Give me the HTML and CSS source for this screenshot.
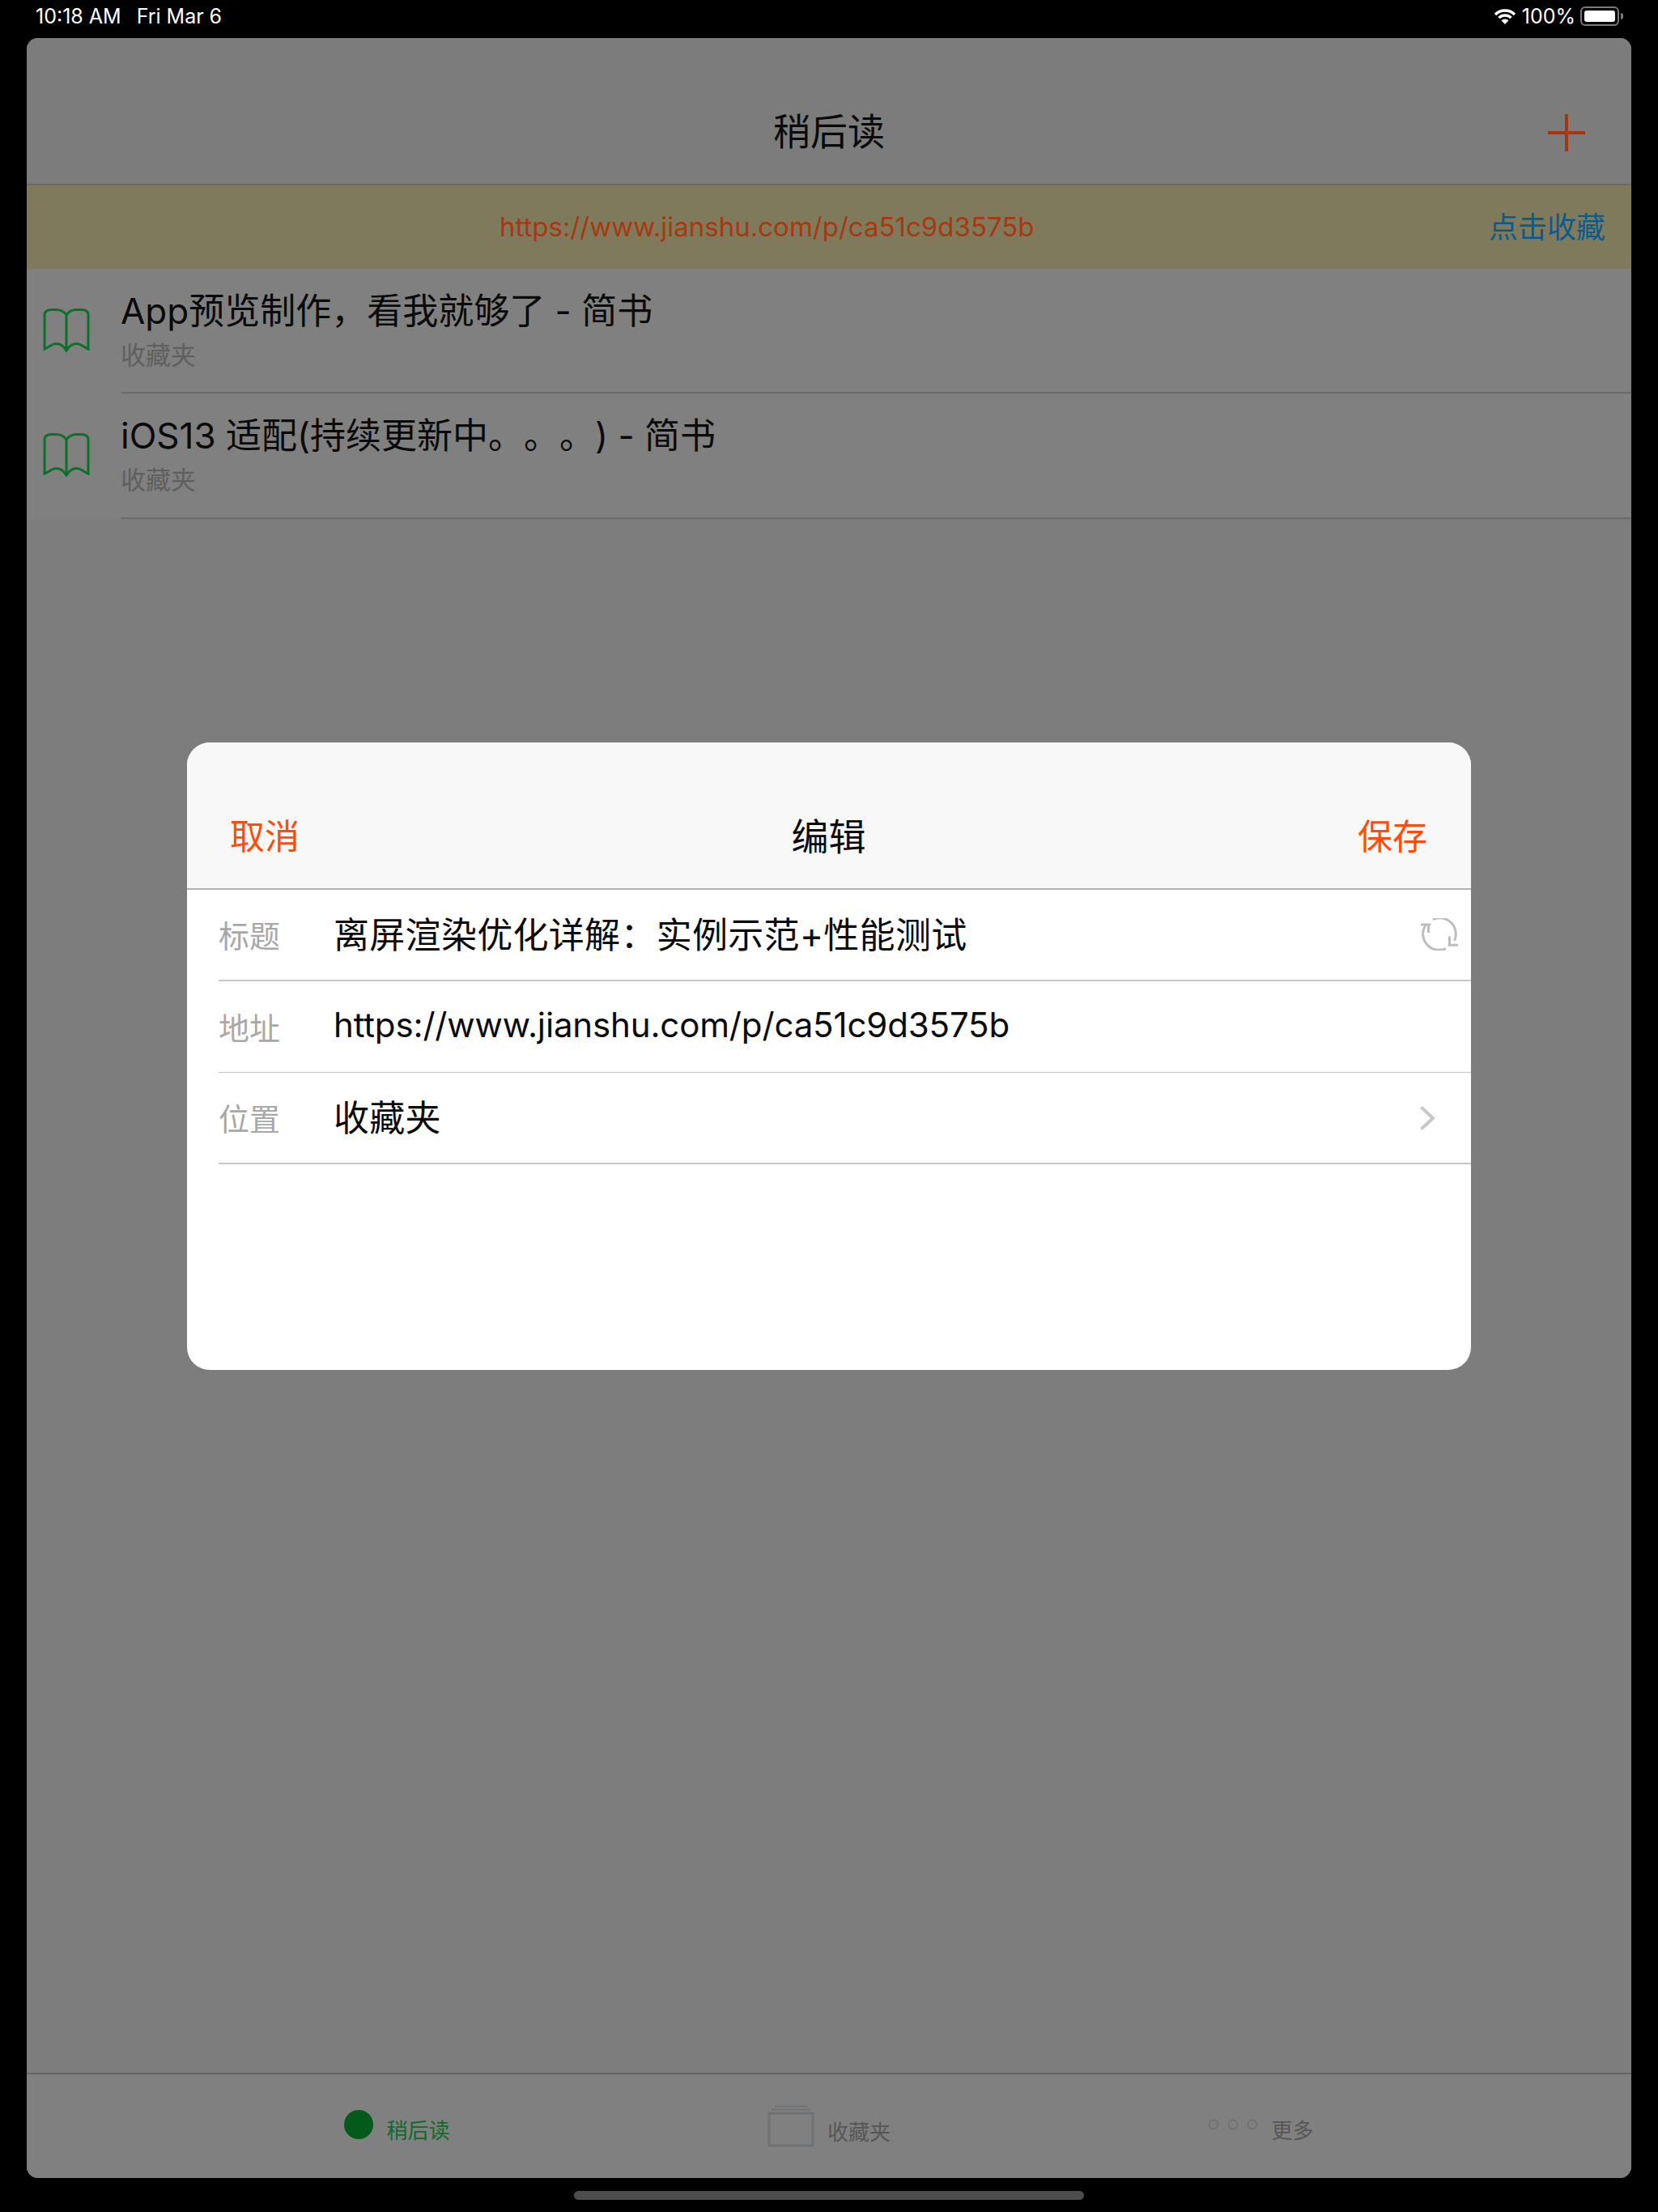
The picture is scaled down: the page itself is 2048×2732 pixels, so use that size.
FILE: index.html
```html
<!DOCTYPE html>
<html lang="zh-CN">
<head>
  <meta charset="UTF-8" />
  <title>稍后读</title>
  <link rel="stylesheet" href="styles.css">
</head>
<body>
  <div class="status">
    <div class="status-left"><span>10:18 AM</span><span>Fri Mar 6</span></div>
    <div class="status-right">
      <svg class="wifi" width="28" height="20" viewBox="0 0 28 20">
        <path d="M2 8a17 17 0 0 1 24 0M6.500 12a11 11 0 0 1 15 0" fill="none" stroke="#fff" stroke-width="3.500"/>
        <path d="M9.500 15.200a6.500 6.500 0 0 1 9 0L14 20z" fill="#fff"/>
      </svg>
      <span>100%</span>
      <div class="battery"><div class="battery-fill"></div></div>
      <div class="battery-nub"></div>
    </div>
  </div>

  <div class="app">
    <header class="nav">
      <h1>稍后读</h1>
      <svg class="plus" width="46" height="46" viewBox="0 0 46 46">
        <path d="M23 0v46M0 23h46" stroke="#a8350c" stroke-width="4"/>
      </svg>
    </header>

    <div class="banner">
      <span class="banner-url">https://www.jianshu.com/p/ca51c9d3575b</span>
      <span class="banner-action">点击收藏</span>
    </div>

    <ul class="list">
      <li class="row">
        <svg class="book" width="58" height="54" viewBox="0 0 58 54">
          <path d="M29 8C26 3.500 21 1.500 16 1.500h-5C5 1.500 2 4 2 8v42c5-2 9-6.500 14.500-6.500S26 47 29 52c3-5 7-8.500 12.500-8.500S51 48 56 50V8c0-4-3-6.500-9-6.500h-5C37 1.500 32 3.500 29 8zv44" fill="none" stroke="#0d7029" stroke-width="3"/>
        </svg>
        <div class="row-text">
          <div class="row-title">App预览制作，看我就够了 - 简书</div>
          <div class="row-sub">收藏夹</div>
        </div>
      </li>
      <li class="row">
        <svg class="book" width="58" height="54" viewBox="0 0 58 54">
          <path d="M29 8C26 3.500 21 1.500 16 1.500h-5C5 1.500 2 4 2 8v42c5-2 9-6.500 14.500-6.500S26 47 29 52c3-5 7-8.500 12.500-8.500S51 48 56 50V8c0-4-3-6.500-9-6.500h-5C37 1.500 32 3.500 29 8zv44" fill="none" stroke="#0d7029" stroke-width="3"/>
        </svg>
        <div class="row-text">
          <div class="row-title">iOS13 适配(持续更新中。。。) - 简书</div>
          <div class="row-sub">收藏夹</div>
        </div>
      </li>
    </ul>

    <nav class="tabs">
      <div class="tab tab-active">
        <div class="tab-dot"></div>
        <span>稍后读</span>
      </div>
      <div class="tab">
        <svg width="58" height="52" viewBox="0 0 58 52">
          <path d="M9 1.500h40M5 5.500h48" stroke="#6f7275" stroke-width="2"/>
          <rect x="2" y="10" width="54" height="40" fill="none" stroke="#6f7275" stroke-width="3"/>
        </svg>
        <span>收藏夹</span>
      </div>
      <div class="tab">
        <svg width="62" height="16" viewBox="0 0 62 16">
          <circle cx="7" cy="8" r="5.500" fill="none" stroke="#6f7275" stroke-width="2"/>
          <circle cx="31" cy="8" r="5.500" fill="none" stroke="#6f7275" stroke-width="2"/>
          <circle cx="55" cy="8" r="5.500" fill="none" stroke="#6f7275" stroke-width="2"/>
        </svg>
        <span>更多</span>
      </div>
    </nav>
  </div>

  <div class="home-bar"></div>

  <!-- edit dialog -->
  <div class="modal">
    <div class="modal-head">
      <span class="modal-btn">取消</span>
      <span class="modal-title">编辑</span>
      <span class="modal-btn">保存</span>
    </div>
    <div class="field">
      <span class="field-label">标题</span>
      <span class="field-value">离屏渲染优化详解：实例示范+性能测试</span>
      <svg class="field-icon" width="46" height="40" viewBox="0 0 46 40">
        <path d="M0 8h12.500M9.500 8v10M5.500 9A20 20 0 0 0 31 37.500M15 1.500A20 20 0 0 1 41.500 28" fill="none" stroke="#bdbdbd" stroke-width="3"/>
        <path d="M46 33.300H33.500M35.500 33.300V22.500" fill="none" stroke="#bdbdbd" stroke-width="3"/>
      </svg>
    </div>
    <div class="field field-thin">
      <span class="field-label">地址</span>
      <span class="field-value field-url">https://www.jianshu.com/p/ca51c9d3575b</span>
    </div>
    <div class="field">
      <span class="field-label">位置</span>
      <span class="field-value">收藏夹</span>
      <svg class="field-chevron" width="20" height="32" viewBox="0 0 20 32">
        <path d="M2.500 2.500L17 16 2.500 29.500" fill="none" stroke="#c7c7cc" stroke-width="4"/>
      </svg>
    </div>
  </div>
</body>
</html>
```

FILE: styles.css
```css
* {
  box-sizing: border-box;
}
body {
  margin: 0;
  width: 2048px;
  height: 2732px;
  overflow: hidden;
  background-color: #000;
  font-family: Inter, "Noto Sans CJK SC", sans-serif;
  text-spacing-trim: space-all;
  position: relative;
}

/* status bar */
.status {
  height: 47px;
  padding: 0 43px 7px 44px;
  display: flex;
  justify-content: space-between;
  align-items: center;
  color: #fff;
  font-size: 25px;
}
.status-left {
  display: flex;
  gap: 19px;
}
.status-right {
  display: flex;
  align-items: center;
}
.wifi {
  margin-right: 7px;
}
.battery {
  width: 48px;
  height: 24px;
  margin-left: 6px;
  padding: 3px;
  border: 2px solid #7a7a7a;
  border-radius: 6px;
}
.battery-fill {
  height: 100%;
  background-color: #fff;
  border-radius: 3px;
}
.battery-nub {
  width: 3px;
  height: 8px;
  margin-left: 2px;
  background-color: #7a7a7a;
  border-radius: 0 3px 3px 0;
}

/* main window, dimmed */
.app {
  margin: 0 33px;
  height: 2643px;
  background-color: #7d7d7d;
  border-radius: 14px;
  overflow: hidden;
  display: flex;
  flex-direction: column;
}
.nav {
  height: 182px;
  flex: none;
  padding-top: 44px;
  display: flex;
  align-items: center;
  justify-content: center;
  position: relative;
  background-color: #7c7c7c;
  border-bottom: 2px solid #6a6b54;
}
.nav h1 {
  margin: 0;
  font-size: 46px;
  font-weight: 400;
  color: #0a0a0a;
}
.plus {
  position: absolute;
  right: 57px;
  top: 94px;
}
.banner {
  height: 103px;
  flex: none;
  padding: 0 32px 0 584px;
  display: flex;
  align-items: center;
  justify-content: space-between;
  background-color: #7f7a5c;
}
.banner-url {
  margin-top: -2px;
  font-size: 33px;
  color: #a8380f;
}
.banner-action {
  margin-top: -5px;
  font-size: 36px;
  color: #0b5a8e;
}
.list {
  margin: 0;
  padding: 0;
  list-style: none;
}
.row {
  height: 155px;
  display: flex;
  background-color: #808080;
}
.row:first-child {
  height: 154px;
}
.book {
  flex: none;
  margin: 49px 0 0 20px;
}
.row-text {
  flex: 1;
  margin-left: 38px;
  padding-top: 17px;
  border-bottom: 2px solid #6b6b6b;
}
.row-title {
  font-size: 44px;
  color: #0a0a0a;
}
.row-sub {
  margin-top: 1px;
  font-size: 31px;
  color: #5f5f5f;
}
.tabs {
  margin-top: auto;
  height: 130px;
  flex: none;
  display: flex;
  justify-content: center;
  border-top: 2px solid #656565;
  background-color: #808080;
}
.tab {
  width: 533.5px;
  padding-top: 38px;
  display: flex;
  justify-content: center;
  align-items: center;
  align-self: flex-start;
  gap: 16px;
  font-size: 26px;
  color: #565656;
}
.tab span {
  margin-top: 11px;
}
.tab-active {
  color: #0f6a2b;
}
.tab-dot {
  width: 36px;
  height: 36px;
  border-radius: 50%;
  background-color: #045a1b;
}

.home-bar {
  width: 630px;
  height: 11px;
  margin: 16px auto 0;
  border-radius: 6px;
  background-color: #4d4d4d;
}

/* edit dialog */
.modal {
  position: absolute;
  left: 231px;
  top: 917px;
  width: 1586px;
  height: 775px;
  background-color: #fff;
  border-radius: 28px;
  overflow: hidden;
}
.modal-head {
  height: 182px;
  padding: 46px 54px 0 53px;
  display: flex;
  align-items: center;
  justify-content: space-between;
  background-color: #f8f8f8;
  border-bottom: 2px solid #b2b2b2;
}
.modal-btn {
  font-size: 43px;
  color: #ff4c0d;
}
.modal-title {
  font-size: 46px;
  color: #0a0a0a;
}
.field {
  height: 113px;
  margin-left: 39px;
  display: flex;
  align-items: center;
  position: relative;
  border-bottom: 2px solid #c8c8c8;
}
.field-thin {
  border-bottom-width: 1px;
}
.field-label {
  width: 142px;
  flex: none;
  margin-top: -2px;
  font-size: 38px;
  color: #a8a8a8;
}
.field-value {
  margin-top: -5px;
  font-size: 44px;
  letter-spacing: 0.3px;
  color: #0a0a0a;
}
.field-url {
  font-size: 42px;
  letter-spacing: -0.15px;
}
.field-icon {
  position: absolute;
  right: 16px;
  top: 35px;
}
.field-chevron {
  position: absolute;
  right: 44px;
  top: 40px;
}
```
